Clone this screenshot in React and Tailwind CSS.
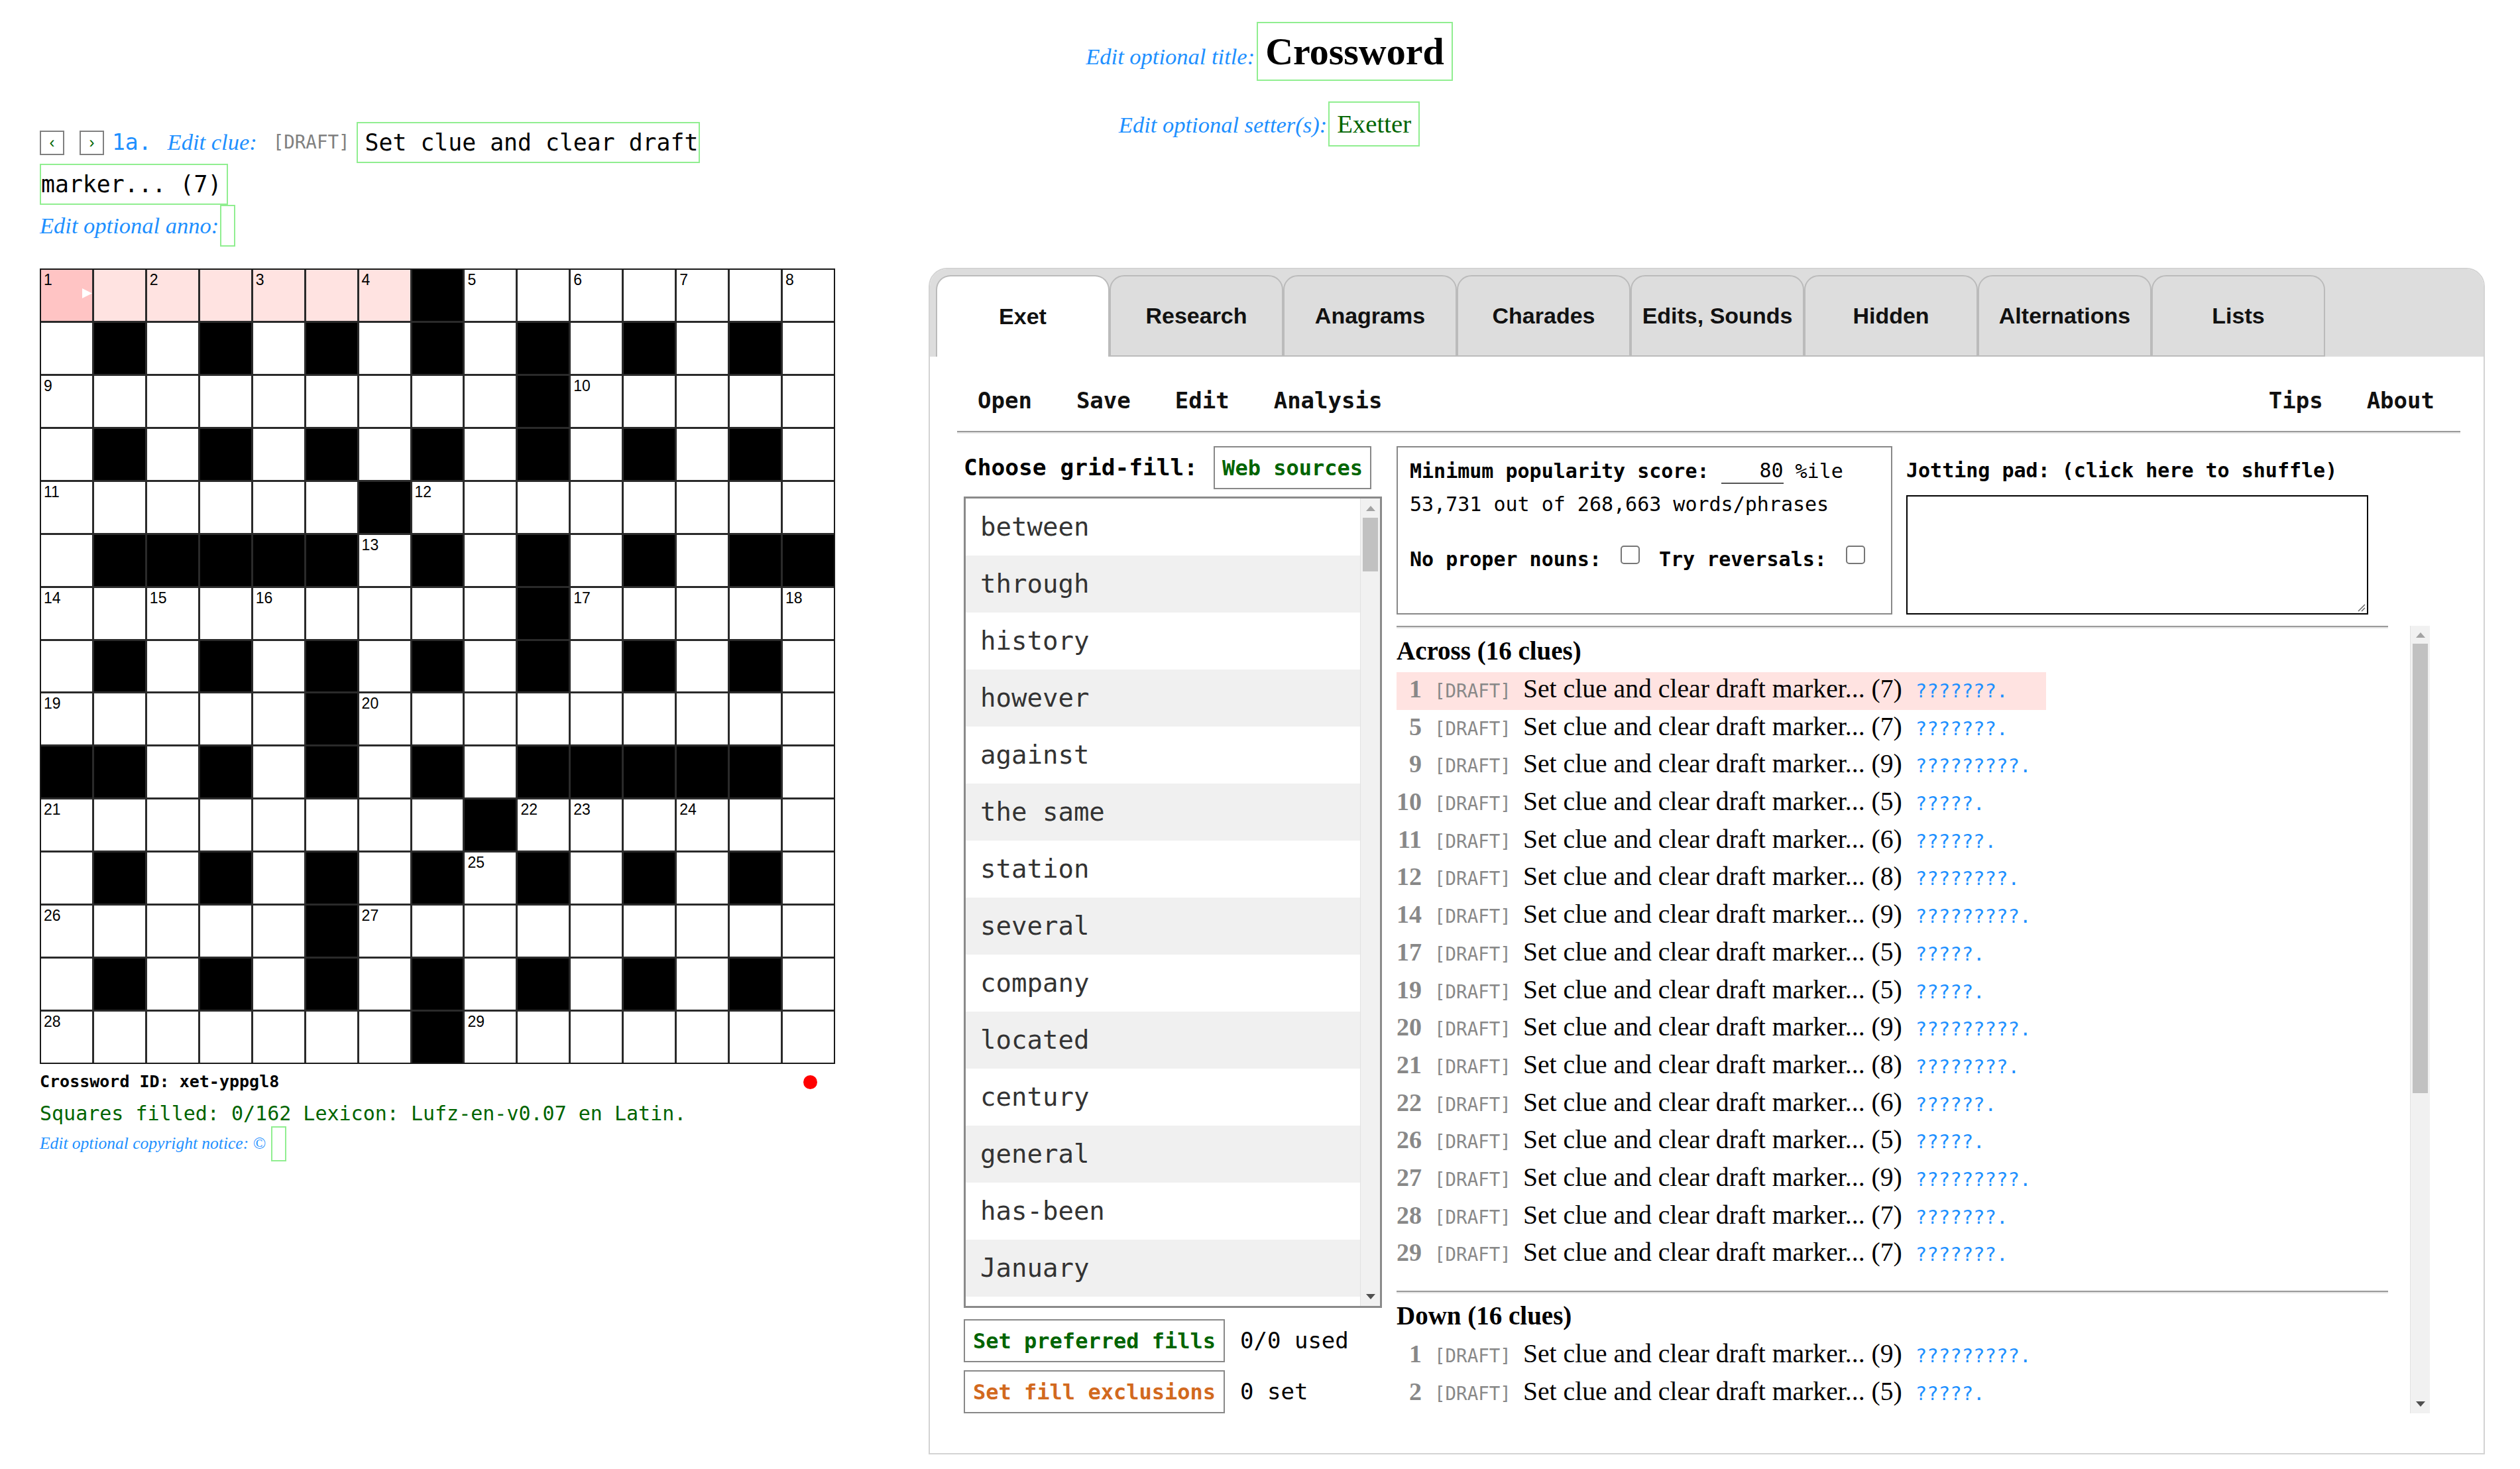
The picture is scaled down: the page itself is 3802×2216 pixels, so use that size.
import React from 'react'

const MONO = "font-['DejaVu_Sans_Mono',monospace]"
const SERIF = "font-['Liberation_Serif',serif]"
const SANS = "font-['Liberation_Sans',Arial,sans-serif]"

const GRID = [
  'WWWWWWWBWWWWWWW',
  'WBWBWBWBWBWBWBW',
  'WWWWWWWWWBWWWWW',
  'WBWBWBWBWBWBWBW',
  'WWWWWWBWWWWWWWW',
  'WBBBBBWBWBWBWBB',
  'WWWWWWWWWBWWWWW',
  'WBWBWBWBWBWBWBW',
  'WWWWWBWWWWWWWWW',
  'BBWBWBWBWBBBBBW',
  'WWWWWWWWBWWWWWW',
  'WBWBWBWBWBWBWBW',
  'WWWWWBWWWWWWWWW',
  'WBWBWBWBWBWBWBW',
  'WWWWWWWBWWWWWWW',
]

const TABS = ['Exet', 'Research', 'Anagrams', 'Charades', 'Edits, Sounds', 'Hidden', 'Alternations', 'Lists']

const WORDS = [
  'between',
  'through',
  'history',
  'however',
  'against',
  'the same',
  'station',
  'several',
  'company',
  'located',
  'century',
  'general',
  'has-been',
  'January',
]

// the clue pane is scrolled to the top, so only this many down clues are in view
const VISIBLE_DOWN = 2

function numberGrid(grid) {
  const size = grid.length
  const open = (r, c) => r >= 0 && c >= 0 && r < size && c < size && grid[r][c] === 'W'
  const numbers = {}
  const across = []
  const down = []
  let n = 0
  for (let r = 0; r < size; r++) {
    for (let c = 0; c < size; c++) {
      if (!open(r, c)) continue
      const startsAcross = !open(r, c - 1) && open(r, c + 1)
      const startsDown = !open(r - 1, c) && open(r + 1, c)
      if (!startsAcross && !startsDown) continue
      n += 1
      numbers[`${r}-${c}`] = n
      if (startsAcross) {
        let len = 0
        while (open(r, c + len)) len++
        across.push({ n, len })
      }
      if (startsDown) {
        let len = 0
        while (open(r + len, c)) len++
        down.push({ n, len })
      }
    }
  }
  return { numbers, across, down }
}

function Hr() {
  return <div className="h-[4px] border-t-2 border-b-2 border-t-[#9a9a9a] border-b-[#e6e6e6]" />
}

function Scrollbar({ topClass, thumbClass, bottomClass }) {
  return (
    <div className="flex w-[30px] shrink-0 flex-col border-l border-[#e2e2e2] bg-[#f1f1f1]">
      <div className={`flex shrink-0 items-center justify-center ${topClass}`}>
        <svg width="14" height="8" viewBox="0 0 14 8">
          <polygon points="7,0 14,8 0,8" fill="#a3a3a3" />
        </svg>
      </div>
      <div className={`mx-[3px] shrink-0 bg-[#c1c1c1] ${thumbClass}`} />
      <div className="flex-1" />
      <div className={`flex shrink-0 items-center justify-center ${bottomClass}`}>
        <svg width="14" height="8" viewBox="0 0 14 8">
          <polygon points="0,0 14,0 7,8" fill="#505050" />
        </svg>
      </div>
    </div>
  )
}

function CrosswordGrid({ numbers }) {
  return (
    <div className="mt-[33px] grid h-[1200px] w-[1200px] grid-cols-[repeat(15,minmax(0,1fr))] grid-rows-[repeat(15,minmax(0,1fr))] gap-[3px] border-2 border-[#1a1a1a] bg-[#2a2a2a]">
      {GRID.map((row, r) =>
        row.split('').map((cell, c) => {
          const num = numbers[`${r}-${c}`]
          const current = r === 0 && c === 0
          const inWord = r === 0 && c > 0 && c < 7
          let bg = 'bg-white'
          if (cell === 'B') bg = 'bg-black'
          else if (current) bg = 'bg-[#ffc4c4]'
          else if (inWord) bg = 'bg-[#ffe3e1]'
          return (
            <div key={`${r}-${c}`} className={`relative ${bg}`}>
              {num && (
                <span className={`absolute left-[4px] top-[4px] text-[23px] leading-none text-black ${SANS}`}>{num}</span>
              )}
              {current && (
                <svg className="absolute right-0 top-[28px]" width="15" height="15" viewBox="0 0 15 15">
                  <polygon points="0,0 15,7.5 0,15" fill="#ffffff" />
                </svg>
              )}
            </div>
          )
        }),
      )}
    </div>
  )
}

function NavButton({ children }) {
  return (
    <span className={`flex h-[37px] w-[37px] items-center justify-center border-2 border-[#808080] bg-white text-[24px] leading-none text-[#006400] ${SANS}`}>
      {children}
    </span>
  )
}

function LeftColumn({ numbers }) {
  return (
    <div className="ml-[60px] w-[1200px] shrink-0">
      <div className="flex h-[62px] items-center">
        <NavButton>‹</NavButton>
        <span className="ml-[23px]">
          <NavButton>›</NavButton>
        </span>
        <span className={`ml-[12px] text-[33px] text-[#1e90ff] ${MONO}`}>1a.</span>
        <span className="ml-[24px] text-[34.5px] italic text-[#1e90ff]">Edit clue:</span>
        <span className={`ml-[24px] text-[27.5px] text-[#808080] ${MONO}`}>[DRAFT]</span>
        <span className={`ml-[10px] flex h-[62px] items-center border-2 border-[#90ee90] pl-[11px] pr-[1px] text-[34.8px] ${MONO}`}>
          Set clue and clear draft
        </span>
      </div>
      <div className={`mt-[1px] flex h-[62px] w-fit items-center border-2 border-[#90ee90] pr-[8px] text-[34.8px] ${MONO}`}>
        marker... (7)
      </div>
      <div className="flex h-[63px] items-center">
        <span className="text-[34.5px] italic text-[#1e90ff]">Edit optional anno:</span>
        <span className="ml-[2px] h-[63px] w-[23px] border-2 border-[#90ee90]" />
      </div>

      <CrosswordGrid numbers={numbers} />

      <div className={`mt-[12px] flex h-[30px] items-center pr-[27px] ${MONO}`}>
        <span className="text-[25px] font-bold">Crossword ID: xet-yppgl8</span>
        <span className="ml-auto h-[21px] w-[21px] rounded-full bg-[#ff0000]" />
      </div>
      <div className={`mt-[14px] flex h-[36px] items-center text-[30px] text-[#006400] ${MONO}`}>
        Squares filled: 0/162 Lexicon: Lufz-en-v0.07 en Latin.
      </div>
      <div className="mt-[2px] flex h-[53px] items-center">
        <span className="text-[25.5px] italic text-[#1e90ff]">Edit optional copyright notice: ©</span>
        <span className="ml-[8px] h-[53px] w-[23px] border-2 border-[#90ee90]" />
      </div>
    </div>
  )
}

function ClueRow({ n, len, active }) {
  return (
    <div className={`flex h-[56.7px] w-fit items-baseline whitespace-nowrap pr-[58px] leading-[50px] ${active ? 'bg-[#ffe3e1]' : ''}`}>
      <span className="w-[38px] text-right text-[38px] font-bold text-[#888888]">{n}</span>
      <span className={`ml-[19px] text-[27.5px] text-[#888888] ${MONO}`}>[DRAFT]</span>
      <span className="ml-[18px] text-[39.7px] text-black">Set clue and clear draft marker... ({len})</span>
      <span className={`ml-[20px] text-[29px] text-[#1e90ff] ${MONO}`}>{'?'.repeat(len)}.</span>
    </div>
  )
}

function Panel({ across, down }) {
  return (
    <section className="ml-[141px] mt-[220px] flex h-[1790px] w-[2348px] shrink-0 flex-col overflow-hidden rounded-t-[28px] border-2 border-[#d3d3d3] bg-white">
      <nav className={`flex h-[132px] shrink-0 bg-[#dddddd] pl-[9px] pt-[9px] ${SANS}`}>
        {TABS.map((t, i) => (
          <div
            key={t}
            className={
              i === 0
                ? 'flex h-[123px] w-[262px] items-center justify-center rounded-t-[22px] border-2 border-b-0 border-[#bbbbbb] bg-white text-[34px] font-bold text-[#111]'
                : 'flex h-[123px] w-[262px] items-center justify-center rounded-t-[22px] border-2 border-[#bbbbbb] bg-[#dddddd] text-[34px] font-bold text-[#111]'
            }
          >
            {t}
          </div>
        ))}
      </nav>

      <div className={`flex-1 pl-[41px] pr-[35px] ${MONO}`}>
        <div className="flex pl-[31px] pr-[39px] pt-[41px] text-[34px] font-bold leading-[50px] text-[#111]">
          <div className="flex gap-[67px]">
            <span>Open</span>
            <span>Save</span>
            <span>Edit</span>
            <span>Analysis</span>
          </div>
          <div className="ml-auto flex gap-[66px]">
            <span>Tips</span>
            <span>About</span>
          </div>
        </div>
        <div className="mt-[21px]">
          <Hr />
        </div>

        <div className="mt-[19px] flex pl-[10px]">
          <div className="w-[631px] shrink-0">
            <div className="flex h-[65px] items-center">
              <span className="text-[34.5px] font-bold">Choose grid-fill:</span>
              <span className="ml-[24px] flex h-[65px] items-center border-2 border-[#888888] px-[11px] text-[32px] font-bold text-[#006400]">
                Web sources
              </span>
            </div>
            <div className="mt-[11px] flex h-[1224px] border-[3px] border-[#8a8a8a]">
              <ul className="flex-1 overflow-hidden">
                {WORDS.map((w, i) => (
                  <li
                    key={w}
                    className={`flex h-[86px] items-center whitespace-pre pl-[22px] text-[39px] text-[#333] ${i % 2 ? 'bg-[#f0f0f0]' : 'bg-white'}`}
                  >
                    {w}
                  </li>
                ))}
              </ul>
              <Scrollbar topClass="h-[29px]" thumbClass="h-[81px]" bottomClass="h-[29px]" />
            </div>
            <div className="mt-[17px] flex items-center">
              <span className="flex h-[65px] items-center border-2 border-[#888888] px-[12px] text-[32px] font-bold text-[#006400]">
                Set preferred fills
              </span>
              <span className="ml-[23px] text-[34px]">0/0 used</span>
            </div>
            <div className="mt-[12px] flex items-center">
              <span className="flex h-[65px] items-center border-2 border-[#888888] px-[12px] text-[32px] font-bold text-[#d2691e]">
                Set fill exclusions
              </span>
              <span className="ml-[23px] text-[34px]">0 set</span>
            </div>
          </div>

          <div className="ml-[22px] w-[1559px] shrink-0">
            <div className="flex h-[254px] items-start">
              <div className="h-[254px] w-[748px] border-2 border-[#888888] pl-[18px] pt-[11px] text-[30px] leading-[50px]">
                <div className="flex items-center">
                  <span className="font-bold">Minimum popularity score:</span>
                  <span className="ml-[18px] inline-block w-[94px] border-b-2 border-[#555] text-right leading-[36px]">80</span>
                  <span className="ml-[18px]">%ile</span>
                </div>
                <div>53,731 out of 268,663 words/phrases</div>
                <div className="mt-[33px] flex items-center">
                  <span className="font-bold">No proper nouns:</span>
                  <span className="mb-[14px] ml-[29px] h-[28px] w-[29px] rounded-[5px] border-2 border-[#767676] bg-white" />
                  <span className="ml-[29px] font-bold">Try reversals:</span>
                  <span className="mb-[14px] ml-[29px] h-[28px] w-[29px] rounded-[5px] border-2 border-[#767676] bg-white" />
                </div>
              </div>
              <div className="ml-[21px] w-[697px] pt-[12px]">
                <div className="text-[30px] font-bold leading-[50px]">Jotting pad: (click here to shuffle)</div>
                <div className="relative mt-[12px] h-[180px] border-2 border-black">
                  <textarea className="block h-full w-full resize-none bg-white outline-none" />
                  <svg className="absolute bottom-[2px] right-[2px]" width="16" height="16" viewBox="0 0 16 16">
                    <path d="M15 5 L5 15 M15 10 L10 15" stroke="#666" strokeWidth="1.5" fill="none" />
                  </svg>
                </div>
              </div>
            </div>

            <div className="mt-[17px] flex h-[1188px]">
              <div className={`flex-1 overflow-hidden pr-[33px] ${SERIF}`}>
                <Hr />
                <h3 className="mb-[10px] mt-[11px] text-[39px] font-bold leading-[45px]">Across (16 clues)</h3>
                {across.map((c, i) => (
                  <ClueRow key={`a${c.n}`} n={c.n} len={c.len} active={i === 0} />
                ))}
                <div className="mt-[26px]">
                  <Hr />
                </div>
                <h3 className="mb-[10px] mt-[11px] text-[39px] font-bold leading-[45px]">Down ({down.length} clues)</h3>
                {down.slice(0, VISIBLE_DOWN).map((c) => (
                  <ClueRow key={`d${c.n}`} n={c.n} len={c.len} active={false} />
                ))}
              </div>
              <Scrollbar topClass="h-[27px]" thumbClass="h-[678px]" bottomClass="h-[29px]" />
            </div>
          </div>
        </div>
      </div>
    </section>
  )
}

export default function App() {
  const { numbers, across, down } = numberGrid(GRID)
  return (
    <div className={`h-[2216px] w-[3802px] overflow-hidden bg-white text-black ${SERIF}`}>
      <header className="flex flex-col items-center gap-[31px] pl-[28px] pt-[33px]">
        <div className="flex items-baseline">
          <span className="text-[34.5px] italic text-[#1e90ff]">Edit optional title:</span>
          <span className="ml-[3px] border-2 border-[#90ee90] px-[11px] py-[10px] text-[58px] font-bold leading-[65px]">Crossword</span>
        </div>
        <div className="flex items-baseline">
          <span className="text-[34.5px] italic text-[#1e90ff]">Edit optional setter(s):</span>
          <span className="ml-[2px] border-2 border-[#90ee90] px-[11px] py-[10px] text-[38.8px] leading-[44px] text-[#006400]">Exetter</span>
        </div>
      </header>
      <div className="-mt-[37px] flex items-start">
        <LeftColumn numbers={numbers} />
        <Panel across={across} down={down} />
      </div>
    </div>
  )
}
